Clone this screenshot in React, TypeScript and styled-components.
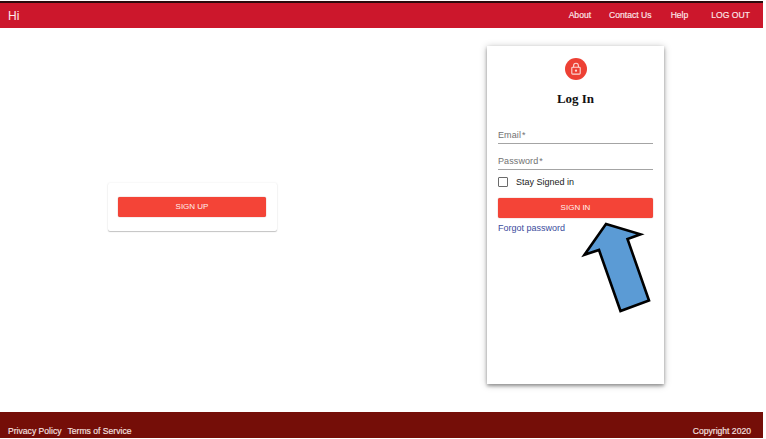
import React from "react";
import styled, { createGlobalStyle } from "styled-components";

const GlobalStyle = createGlobalStyle`
  * { box-sizing: border-box; }
  html, body { margin: 0; background: #fff; overflow: hidden; }
  body { font-family: "Liberation Sans", Arial, sans-serif; font-size: 9px; line-height: 12px; }
`;

const Page = styled.div`
  display: flex;
  flex-direction: column;
  width: 763px;
  height: 437px;
  margin-top: 1px;
`;

const Header = styled.header`
  display: flex;
  justify-content: space-between;
  height: 27px;
  flex: none;
  padding: 6px 13px 0 8px;
  border-top: 2px solid #2b0a0c;
  background: #cc172c;
  color: #fde9eb;
`;

const Greeting = styled.span`
  font-size: 12px;
  line-height: 14px;
`;

const Nav = styled.nav`
  display: flex;
  font-size: 8.6px;
`;

const NavLink = styled.a<{ $gap?: number; $tracking?: number }>`
  margin-left: ${(p) => p.$gap ?? 0}px;
  letter-spacing: ${(p) => p.$tracking ?? 0}px;
  white-space: nowrap;
  -webkit-text-stroke: 0.15px currentColor;
`;

const Main = styled.main`
  display: flex;
  align-items: flex-start;
  flex: 1;
  padding: 18px 0 0 108px;
`;

const SignUpCard = styled.section`
  width: 169px;
  height: 48px;
  margin-top: 137px;
  padding: 14px 11px 0 10px;
  border-radius: 2px;
  box-shadow: 0 1px 1px rgba(0, 0, 0, 0.22), 0 0 2px rgba(0, 0, 0, 0.1);
`;

const LoginCard = styled.section`
  display: flex;
  flex-direction: column;
  width: 177px;
  height: 338px;
  margin-left: 210px;
  padding: 12px 11px 0;
  background: #fff;
  box-shadow: 0 2px 3px rgba(0, 0, 0, 0.3), 0 1px 7px rgba(0, 0, 0, 0.27);
`;

const Button = styled.button`
  display: block;
  width: 100%;
  height: 20px;
  flex: none;
  padding: 0;
  border: 0;
  border-radius: 2px;
  background: #f44437;
  box-shadow: 0 0 1px #a94b43;
  color: #fff0ed;
  font: 8px/20px "Liberation Sans", Arial, sans-serif;
  letter-spacing: 0;
`;

const Badge = styled.div`
  display: flex;
  align-items: center;
  justify-content: center;
  align-self: center;
  width: 22px;
  height: 22px;
  border-radius: 50%;
  background: #ed4034;
`;

const Title = styled.h1`
  margin: 11px 0 0;
  color: #111;
  font: bold 13px/16px "Liberation Serif", "Times New Roman", serif;
  text-align: center;
`;

const Field = styled.label<{ $top: number }>`
  display: block;
  height: 15px;
  flex: none;
  margin-top: ${(p) => p.$top}px;
  border-bottom: 1px solid #a4a4a4;
  color: #717171;
  letter-spacing: 0.1px;
`;

const Star = styled.span`
  margin-left: 1px;
`;

const CheckRow = styled.label`
  display: flex;
  align-items: center;
  gap: 8px;
  height: 12px;
  margin: 6px 0 10px;
  color: #222;
  letter-spacing: 0;
`;

const CheckBox = styled.span`
  width: 10px;
  height: 10px;
  border: 1px solid #6b6b6b;
  border-radius: 1px;
`;

const Forgot = styled.a`
  margin-top: 4px;
  color: #3b4c9d;
`;

const Footer = styled.footer`
  display: flex;
  justify-content: space-between;
  height: 26px;
  flex: none;
  padding: 13px 12px 0 8px;
  background: #750e08;
  color: #f7e3e1;
  font-size: 8.6px;
  -webkit-text-stroke: 0.15px currentColor;
`;

const FooterLinks = styled.div`
  display: flex;
  gap: 6px;
`;

const Pointer = styled.svg`
  position: absolute;
  left: 576px;
  top: 216px;
`;

const LockIcon = () => (
  <svg width="12" height="14" viewBox="0 0 12 14" fill="none" stroke="#fbd9d5" strokeWidth="1.1">
    <rect x="1.8" y="5.3" width="8.4" height="6.8" rx="0.8" />
    <path d="M3.6 5.2V3.7a2.4 2.4 0 0 1 4.8 0v1.5" />
    <circle cx="6" cy="8.7" r="1.15" fill="#fbd9d5" stroke="none" />
  </svg>
);

export default function App() {
  return (
    <>
      <GlobalStyle />
      <Page>
        <Header>
          <Greeting>Hi</Greeting>
          <Nav>
            <NavLink>About</NavLink>
            <NavLink $gap={18}>Contact Us</NavLink>
            <NavLink $gap={19}>Help</NavLink>
            <NavLink $gap={23}>LOG OUT</NavLink>
          </Nav>
        </Header>
        <Main>
          <SignUpCard>
            <Button>SIGN UP</Button>
          </SignUpCard>
          <LoginCard>
            <Badge>
              <LockIcon />
            </Badge>
            <Title>Log In</Title>
            <Field $top={22}>
              Email<Star>*</Star>
            </Field>
            <Field $top={11}>
              Password<Star>*</Star>
            </Field>
            <CheckRow>
              <CheckBox />
              Stay Signed in
            </CheckRow>
            <Button>SIGN IN</Button>
            <Forgot>Forgot password</Forgot>
          </LoginCard>
        </Main>
        <Footer>
          <FooterLinks>
            <span>Privacy Policy</span>
            <span>Terms of Service</span>
          </FooterLinks>
          <span>Copyright 2020</span>
        </Footer>
      </Page>
      <Pointer width="80" height="100" viewBox="576 216 80 100">
        <path
          d="M606 224 L640.5 234.3 L627.5 239 L649 300.5 L620.5 311 L599 250 L584.5 254.7 Z"
          fill="#5b9bd5"
          stroke="#000"
          strokeWidth="2.6"
          strokeMiterlimit="8"
        />
      </Pointer>
    </>
  );
}
